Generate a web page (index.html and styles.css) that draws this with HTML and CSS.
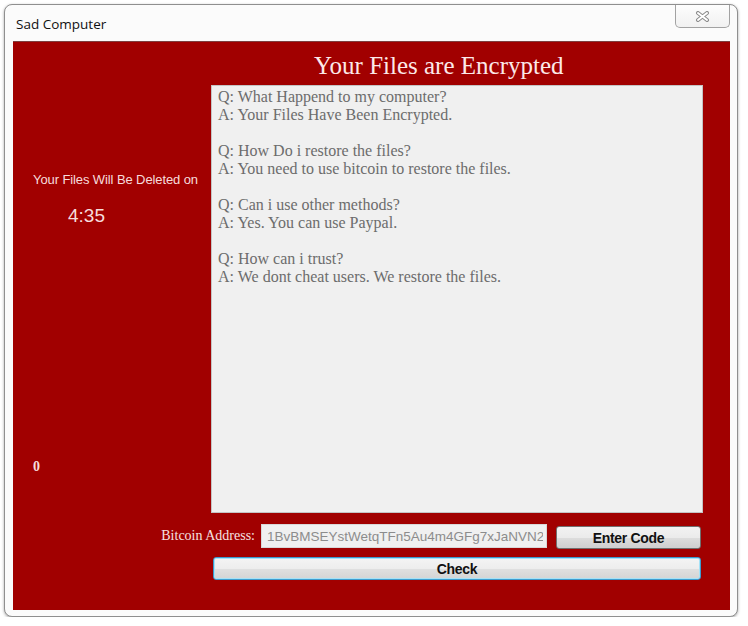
FILE: index.html
```html
<!DOCTYPE html>
<html lang="en">
  <head>
    <meta charset="UTF-8" />
    <title>Sad Computer</title>
    <link rel="stylesheet" href="styles.css">
  </head>
  <body>

    <div class="window">
      <div class="titlebar">
        <span class="title-text">Sad Computer</span>
        <div class="close-btn">
          <svg width="15" height="11" viewBox="0 0 15 11">
            <path d="M3 2 L12 9 M12 2 L3 9" stroke="#8a8a8a" stroke-width="4" stroke-linecap="round" fill="none"/>
            <path d="M3 2 L12 9 M12 2 L3 9" stroke="#fff" stroke-width="2" stroke-linecap="round" fill="none"/>
          </svg>
        </div>
      </div>

      <div class="client">
        <div class="top-section">
          <div class="left-panel">
            <div class="deleted-label">Your Files Will Be Deleted on</div>
            <div class="timer">4:35</div>
            <div class="counter">0</div>
          </div>

          <div class="main-panel">
            <h1 class="heading">Your Files are Encrypted</h1>
            <div class="message-box">
              <p>Q: What Happend to my computer?<br>A: Your Files Have Been Encrypted.</p>
              <p>Q: How Do i restore the files?<br>A: You need to use bitcoin to restore the files.</p>
              <p>Q: Can i use other methods?<br>A: Yes. You can use Paypal.</p>
              <p>Q: How can i trust?<br>A: We dont cheat users. We restore the files.</p>
            </div>
          </div>
        </div>

        <div class="address-row">
          <label class="address-label" for="btcAddress">Bitcoin Address:</label>
          <input id="btcAddress" class="address-input" type="text" value="1BvBMSEYstWetqTFn5Au4m4GFg7xJaNVN2" readonly>
          <button class="btn btn-enter">Enter Code</button>
        </div>

        <div class="check-row">
          <button class="btn btn-check">Check</button>
        </div>
      </div>
    </div>

  </body>
</html>
```

FILE: styles.css
```css
* {
  box-sizing: border-box;
}

body {
  margin: 0;
  padding: 0;
  background-color: #fff;
  font-family: "Liberation Sans", Arial, sans-serif;
}

.window {
  width: 734px;
  height: 613px;
  margin: 4px 0 0 4px;
  border: 1px solid #8f8f8f;
  border-radius: 8px;
  background-color: #fbfbfb;
  box-shadow: 0 1px 3px rgba(0, 0, 0, 0.35);
  display: flex;
  flex-direction: column;
}

/* title bar */
.titlebar {
  height: 36px;
  display: flex;
  justify-content: space-between;
  align-items: flex-start;
  padding-left: 11px;
}

.title-text {
  font-family: "Open Sans", "Noto Sans", sans-serif;
  font-size: 13.5px;
  color: #111;
  margin-top: 10px;
}

.close-btn {
  width: 55px;
  height: 23px;
  margin-right: 7px;
  border: 1px solid #a2a2a2;
  border-top: none;
  border-radius: 0 0 5px 5px;
  background: linear-gradient(#fdfdfd, #f1f1f1);
  display: flex;
  justify-content: center;
  align-items: center;
}

/* red client area */
.client {
  flex: 1;
  margin: 0 7px 6px 8px;
  background-color: #a10000;
  border-top: 1px solid #7d4040;
  padding-right: 27px;
  display: flex;
  flex-direction: column;
}

.top-section {
  display: grid;
  grid-template-columns: 198px 1fr;
  height: 471px;
}

.left-panel {
  display: flex;
  flex-direction: column;
  padding-left: 20px;
  color: #f6dcdc;
}

.deleted-label {
  margin-top: 130px;
  font-size: 13px;
  line-height: 15px;
  letter-spacing: -0.1px;
}

.timer {
  margin-top: 18px;
  margin-left: 35px;
  font-size: 19px;
  line-height: 22px;
}

.counter {
  margin-top: auto;
  margin-bottom: 38px;
  font-family: "Liberation Serif", serif;
  font-weight: bold;
  font-size: 14px;
  line-height: 16px;
}

.main-panel {
  display: flex;
  flex-direction: column;
}

.heading {
  margin: 0;
  padding: 5px 0 0 103px;
  height: 43px;
  font-family: "Liberation Serif", serif;
  font-weight: normal;
  font-size: 25px;
  line-height: 38px;
  color: #fce9e9;
}

.message-box {
  flex: 1;
  background-color: #f0f0f0;
  border: 1px solid #c4c4c4;
  padding: 2px 6px;
  font-family: "Liberation Serif", serif;
  font-size: 16px;
  line-height: 18px;
  color: #6c6c6c;
}

.message-box p {
  margin: 0 0 18px 0;
}

/* bottom controls */
.address-row {
  display: flex;
  align-items: center;
  margin-top: 10px;
  height: 26px;
}

.address-label {
  width: 242px;
  text-align: right;
  font-family: "Liberation Serif", serif;
  font-size: 14px;
  color: #f6e2e2;
}

.address-input {
  width: 286px;
  height: 24px;
  margin-left: 6px;
  padding: 0 3px 0 5px;
  border: 1px solid #d8d8d8;
  background-color: #f0f0f0;
  font-family: "Liberation Sans", Arial, sans-serif;
  font-size: 13.5px;
  color: #8c8c8c;
  outline: none;
}

.btn {
  height: 23px;
  padding: 0;
  border: 1px solid #707070;
  border-radius: 3px;
  background: linear-gradient(#f2f2f2 0%, #ebebeb 50%, #dddddd 51%, #cfcfcf 100%);
  font-family: "Liberation Sans", Arial, sans-serif;
  font-weight: bold;
  font-size: 14px;
  letter-spacing: -0.3px;
  color: #111;
}

.btn-enter {
  width: 145px;
  margin-left: 9px;
  margin-top: 3px;
}

.check-row {
  margin-top: 8px;
  padding-left: 200px;
}

.btn-check {
  width: 488px;
  border-color: #3c9ccf;
  box-shadow: inset 0 0 0 1px #a6e2f7;
  background: linear-gradient(#f4f4f4 0%, #ededed 50%, #e0e0e0 51%, #d4d4d4 100%);
}
```
